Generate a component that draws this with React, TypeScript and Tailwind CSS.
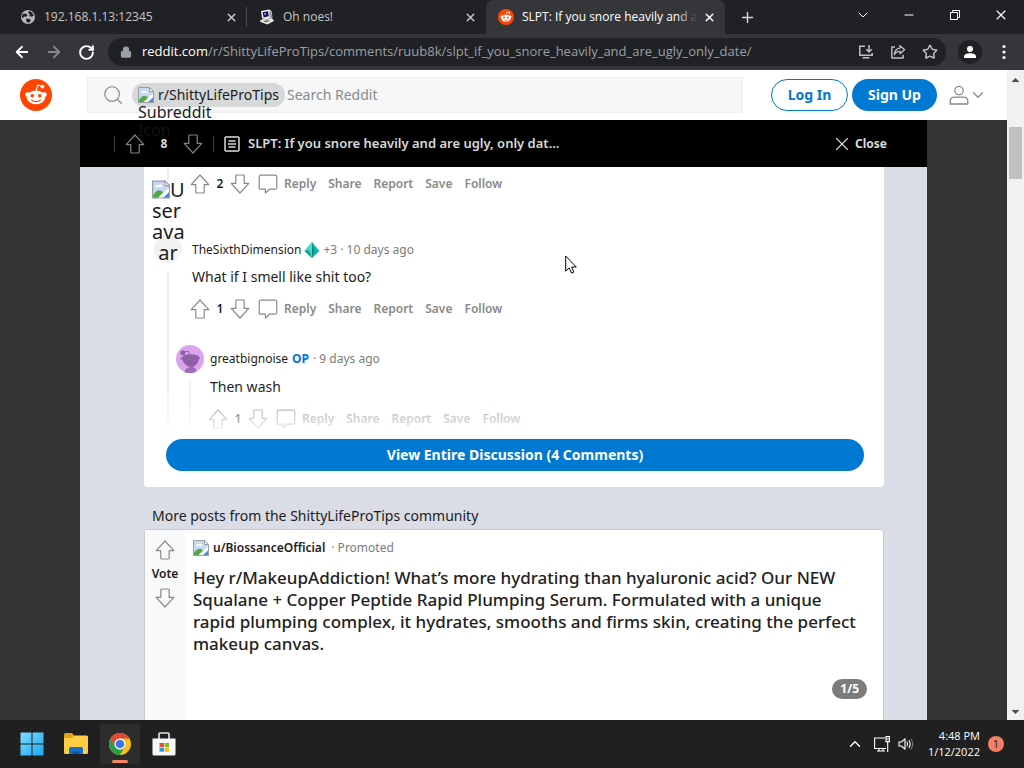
import React, { useState } from 'react';
import {
  ArrowLeft,
  ArrowRight,
  ChevronDown,
  ChevronUp,
  Lock,
  Minus,
  Plus,
  RotateCw,
  Search,
  Star,
  X,
} from 'lucide-react';

type IconProps = { className?: string };

const plex = "font-['Noto_Sans','Open_Sans',sans-serif]";
const segoe = "font-['Open_Sans','Noto_Sans',sans-serif]";

const Snoo = ({ className = '' }: IconProps) => (
  <svg viewBox="0 0 32 32" className={className} aria-hidden="true">
    <circle cx="16" cy="16" r="16" fill="#ff4500" />
    <path d="M16.2 11.5l1.5-5.4 4 .9" fill="none" stroke="#fff" strokeWidth="1.2" strokeLinejoin="round" />
    <circle cx="22.4" cy="7.6" r="1.9" fill="#fff" />
    <circle cx="7.6" cy="15.6" r="2.4" fill="#fff" />
    <circle cx="24.4" cy="15.6" r="2.4" fill="#fff" />
    <ellipse cx="16" cy="18.3" rx="9.2" ry="6.9" fill="#fff" />
    <circle cx="12.3" cy="16.8" r="1.8" fill="#ff4500" />
    <circle cx="19.7" cy="16.8" r="1.8" fill="#ff4500" />
    <path d="M11.8 21.2c2.2 1.8 6.2 1.8 8.4 0" fill="none" stroke="#ff4500" strokeWidth="1.2" strokeLinecap="round" />
  </svg>
);

const Globe = ({ className = '' }: IconProps) => (
  <svg viewBox="0 0 16 16" className={className} aria-hidden="true">
    <circle cx="8" cy="8" r="7" fill="#b4b6b9" />
    <path
      d="M2.6 5l3.2-.6L7.6 6 6.2 7.8l-2-.2L3 9 1.8 8zM9 1.8l3.2 1.9 1.5 2.8-2 1.2-2.4-.6.6-1.9-1.8-1.3zM6 9.5l4 .6.8 1.8-2.3 1.9-1.9-.8z"
      fill="#202124"
    />
  </svg>
);

const OldPc = ({ className = '' }: IconProps) => (
  <svg viewBox="0 0 16 16" className={className} aria-hidden="true">
    <path d="M2 2l8-1.5L12.5 2l1 6.5-8 2.5L3 9z" fill="#f2f2f2" />
    <path d="M3.6 3.2l5.4-1 .8 5-5.2 1.2z" fill="#101060" />
    <path d="M5 4.2l2-.3.3 1.6-2 .4z" fill="#7aa5ff" />
    <path d="M1 11.5L4 10l1.5 1.2 7-2.2 2.7 2.7-6.7 3.8-7-2.5z" fill="#e8e8e8" />
    <path d="M4 12.2L8.5 11l2.7 1L7 13.6z" fill="#777" />
    <path d="M10.2 2l2 .8.8 5.5-2 .6z" fill="#8d8d8d" />
  </svg>
);

const BrokenImage = ({ className = '' }: IconProps) => (
  <svg viewBox="0 0 16 16" className={className} aria-hidden="true">
    <path d="M.5.5h11l4 4v11H.5z" fill="#c8d9f3" />
    <path d="M3 5.7a1.6 1.6 0 0 1 2.6-1.2A2 2 0 0 1 9.2 6z" fill="#fff" />
    <path d="M1 13c3-5 6-5.5 9-2.5l-4 5H1z" fill="#54a944" />
    <path d="M15.5 6L5 15.5h4l6.5-5.500z" fill="#fff" />
    <path d="M15.5 10L10 15.5h5.5z" fill="#4e86d6" />
    <path d="M.5 15.5V.5h11l4 4v11z" fill="none" stroke="#9a9da1" />
    <path d="M11.5.5v4h4z" fill="#fff" stroke="#9a9da1" />
  </svg>
);

const UpArrow = ({ className = '' }: IconProps) => (
  <svg viewBox="0 0 20 20" className={className} fill="none" stroke="currentColor" strokeWidth="1.2" strokeLinejoin="round" aria-hidden="true">
    <path d="M10 1L1.2 10.6h4.6v7.6q0 .8.8.8h6.8q.8 0 .8-.8v-7.6h4.6z" />
  </svg>
);

const DownArrow = ({ className = '' }: IconProps) => (
  <svg viewBox="0 0 20 20" className={className} fill="none" stroke="currentColor" strokeWidth="1.2" strokeLinejoin="round" aria-hidden="true">
    <path d="M10 19l8.8-9.6h-4.6V1.8q0-.8-.8-.8H6.6q-.8 0-.8.8v7.6H1.2z" />
  </svg>
);

const Bubble = ({ className = '' }: IconProps) => (
  <svg viewBox="0 0 20 20" className={className} fill="none" stroke="currentColor" strokeWidth="1.2" strokeLinejoin="round" aria-hidden="true">
    <path d="M3 1.2h14q1.8 0 1.8 1.8v10.4q0 1.8-1.8 1.8h-5.6L7.4 19v-3.8H3q-1.8 0-1.8-1.8V3Q1.2 1.2 3 1.2z" />
  </svg>
);

const PostIcon = ({ className = '' }: IconProps) => (
  <svg viewBox="0 0 16 16" className={className} fill="none" stroke="currentColor" aria-hidden="true">
    <rect x="1" y="1" width="14" height="14" rx="1" strokeWidth="1.5" />
    <path d="M4.5 5h7M4 8h8M4.5 11h7" strokeWidth="1.4" />
  </svg>
);

const Gem = ({ className = '' }: IconProps) => (
  <svg viewBox="0 0 16 16" className={className} aria-hidden="true">
    <path d="M8 0l7.5 9L8 16 .5 9z" fill="#17b5a6" />
    <path d="M8 0v16L.5 9z" fill="#4fdccb" />
    <path d="M8 0l2.5 10L8 16z" fill="#0d8f88" />
    <path d="M.5 9L5 8l3 8z" fill="#1f9d92" />
  </svg>
);

const Avatar = ({ className = '' }: IconProps) => (
  <svg viewBox="0 0 28 28" className={className} aria-hidden="true">
    <circle cx="14" cy="14" r="14" fill="#dda4ee" />
    <path d="M8.5 26.9Q9 23 14 22t6.5 4.500a14 14 0 0 1-12 .4z" fill="#a06bb8" />
    <path d="M7 10.500q7.500-2.500 15 0 1.500 4-.5 7.500-2.500 4-6.500 4t-7-4Q5 14.500 7 10.500z" fill="#8f5fa8" />
    <path d="M13.5 10l-1-4-4 1" fill="none" stroke="#8f5fa8" strokeWidth="1" />
    <circle cx="6.8" cy="7.8" r="2.5" fill="#8f5fa8" />
    <circle cx="5.8" cy="13.5" r="1.2" fill="#8f5fa8" />
    <circle cx="22.7" cy="13" r="1.2" fill="#8f5fa8" />
  </svg>
);

const Tab = ({ icon, title, active, divider }: { icon: React.ReactNode; title: string; active?: boolean; divider?: boolean }) => (
  <div
    className={`relative flex w-[239px] min-w-0 items-center pl-3 pr-2 ${
      active ? 'rounded-t-lg bg-[#35363a] text-white' : 'text-[#c4c7ca]'
    }`}
  >
    {icon}
    <span className="relative ml-2 min-w-0 flex-1 overflow-hidden whitespace-nowrap text-xs">
      {title}
      {active && <span className="absolute inset-y-0 right-0 w-5 bg-linear-to-r from-transparent to-[#35363a]" />}
    </span>
    <button aria-label="Close tab" className="ml-1 flex size-4 items-center justify-center">
      <X size={13} strokeWidth={2.7} />
    </button>
    {divider && <span className="absolute right-0 h-5 w-px bg-[#4a4c50]" />}
  </div>
);

const Browser = () => (
  <div className={`shrink-0 bg-[#202124] ${segoe}`}>
    <div className="flex h-[34px]">
      <div className="flex min-w-0 flex-1 pl-2">
        <Tab icon={<Globe className="size-4 shrink-0" />} title="192.168.1.13:12345" divider />
        <Tab icon={<OldPc className="size-4 shrink-0" />} title="Oh noes!" />
        <Tab icon={<Snoo className="size-4 shrink-0" />} title="SLPT: If you snore heavily and are" active />
        <button aria-label="New tab" className="flex w-11 items-center justify-center text-[#d6d8da]">
          <Plus size={17} />
        </button>
      </div>
      <div className="flex pb-1 text-white">
        <button aria-label="Search tabs" className="flex w-[46px] items-center justify-center">
          <ChevronDown size={16} strokeWidth={1.5} />
        </button>
        <button aria-label="Minimize" className="flex w-[46px] items-center justify-center">
          <Minus size={14} strokeWidth={1.7} />
        </button>
        <button aria-label="Restore" className="flex w-[46px] items-center justify-center">
          <svg viewBox="0 0 12 12" className="size-3" fill="none" stroke="currentColor">
            <path d="M1.5 3.5h7v7h-7zM3.5 3.5v-2h7v7h-2" />
          </svg>
        </button>
        <button aria-label="Close" className="flex w-[46px] items-center justify-center">
          <X size={16} strokeWidth={1.6} />
        </button>
      </div>
    </div>
    <div className="flex h-9 items-center bg-[#35363a] pr-3">
      <button aria-label="Back" className="flex w-8 justify-center pl-3 text-white">
        <ArrowLeft size={18} strokeWidth={2.4} className="shrink-0" />
      </button>
      <button aria-label="Forward" className="flex w-8 justify-center pl-3 text-[#85878b]">
        <ArrowRight size={18} strokeWidth={2.4} className="shrink-0" />
      </button>
      <button aria-label="Reload" className="flex w-8 justify-center pl-3 text-white">
        <RotateCw size={17} strokeWidth={2.8} className="shrink-0" />
      </button>
      <div className="ml-3 flex h-7 min-w-0 flex-1 items-center rounded-full bg-[#202124] pl-3 pr-2 text-[#bdc1c6]">
        <Lock size={12} fill="#9aa0a6" stroke="#9aa0a6" strokeWidth={2.5} className="shrink-0" />
        <span className="ml-2.5 min-w-0 flex-1 overflow-hidden whitespace-nowrap text-[13px] text-[#9aa0a6]">
          <span className="text-white">reddit.com</span>
          /r/ShittyLifeProTips/comments/ruub8k/slpt_if_you_snore_heavily_and_are_ugly_only_date/
        </span>
        <div className="flex items-center gap-4">
          <button aria-label="Install Reddit">
            <svg viewBox="0 0 16 16" className="size-4" fill="none" stroke="currentColor" strokeWidth="1.5">
              <path d="M7 2.2H1.8v9h12.4V9M4.5 13.8h7M11 1v6.5M8.3 5.2L11 7.9l2.7-2.7" />
            </svg>
          </button>
          <button aria-label="Share page">
            <svg viewBox="0 0 16 16" className="size-4" fill="none" stroke="currentColor" strokeWidth="1.4" strokeLinejoin="round">
              <path d="M5 3H1.8v11h11.4v-3.2M10 1.8l4.6 4L10 9.6V7.4C7.4 7.4 5.6 8.4 4.4 10.6 4.7 7 6.6 4.5 10 4.1z" />
            </svg>
          </button>
          <button aria-label="Bookmark">
            <Star size={16} strokeWidth={2.2} />
          </button>
        </div>
      </div>
      <button aria-label="Profile" className="ml-3 flex size-6 items-center justify-center rounded-full bg-[#202124]">
        <svg viewBox="0 0 14 14" className="size-3.5" fill="#fff">
          <circle cx="7" cy="4" r="3" />
          <path d="M1 13v-1.600C1 9.300 4 8.200 7 8.200s6 1.100 6 3.200V13z" />
        </svg>
      </button>
      <button aria-label="Menu" className="ml-3.5 flex w-4 justify-center">
        <svg viewBox="0 0 4 16" className="h-4 w-1" fill="#fff">
          <circle cx="2" cy="2.5" r="1.6" />
          <circle cx="2" cy="8" r="1.6" />
          <circle cx="2" cy="13.5" r="1.6" />
        </svg>
      </button>
    </div>
  </div>
);

const Header = () => {
  const [query, setQuery] = useState('');

  return (
    <header className="relative z-10 flex h-[50px] shrink-0 items-center bg-white px-5">
      <a href="#home" aria-label="Reddit home">
        <Snoo className="size-8" />
      </a>
      <div className="ml-[35px] flex h-9 min-w-0 flex-1 items-center border border-[#edeff1] bg-[#f6f7f8] pl-3.5">
        <Search size={22} strokeWidth={1.3} className="shrink-0 text-[#878a8c]" />
        <div className="relative ml-2 flex h-6 items-center gap-1 rounded-full bg-[#d7d8d9] px-1.5 text-[#1c1c1c]">
          <BrokenImage className="size-4" />
          <span className="text-sm">r/ShittyLifeProTips</span>
          {/* alt text of the missing icon spills out below the chip */}
          <span className="absolute left-1.5 top-5 text-base leading-[18px]">
            Subreddit
            <br />
            <span className="text-[#121212]">Icon</span>
          </span>
        </div>
        <input
          type="text"
          aria-label="Search Reddit"
          placeholder="Search Reddit"
          value={query}
          onChange={(e) => setQuery(e.target.value)}
          className="ml-0.5 min-w-0 flex-1 bg-transparent text-sm outline-none placeholder:text-[#878a8c]"
        />
      </div>
      <button className="ml-7 h-8 w-[77px] rounded-full border border-[#0079d3] text-sm font-bold text-[#0079d3]">Log In</button>
      <button className="ml-1 h-8 w-[85px] rounded-full bg-[#0079d3] text-sm font-bold text-white">Sign Up</button>
      <button aria-label="User menu" className="ml-3 flex items-center text-[#878a8c]">
        <svg viewBox="0 0 20 20" className="size-5" fill="none" stroke="currentColor" strokeWidth="1.3" strokeLinejoin="round">
          <circle cx="10" cy="5.6" r="4.2" />
          <path d="M1.2 19v-2.6q0-4.2 4.4-4.2h8.8q4.4 0 4.4 4.2V19z" />
        </svg>
        <ChevronDown size={18} strokeWidth={1.8} />
      </button>
    </header>
  );
};

const PostBar = () => (
  <div className="flex h-[47px] shrink-0 items-center bg-black pl-[34px] pr-10 text-[#d7dadc]">
    <span className="h-4 w-px bg-[#3f4042]" />
    <button aria-label="Upvote" className="ml-2.5">
      <UpArrow className="size-5 text-[#818384]" />
    </button>
    <span className="w-[38px] text-center text-xs font-bold">8</span>
    <button aria-label="Downvote">
      <DownArrow className="size-5 text-[#818384]" />
    </button>
    <span className="ml-2.5 h-4 w-px bg-[#3f4042]" />
    <PostIcon className="ml-2.5 size-4 shrink-0" />
    <h1 className="ml-2 whitespace-nowrap text-[13px] font-semibold">
      SLPT: If you snore heavily and are ugly, only dat...
    </h1>
    <button className="ml-auto flex items-center gap-0.5 text-xs font-bold">
      <X size={22} strokeWidth={1.2} />
      Close
    </button>
  </div>
);

const Actions = ({ votes }: { votes: number }) => (
  <div className="flex h-6 items-center text-xs font-semibold text-[#878a8c]">
    <button aria-label="Upvote">
      <UpArrow className="size-5" />
    </button>
    <span className="w-5 text-center text-[#1c1c1c]">{votes}</span>
    <button aria-label="Downvote">
      <DownArrow className="size-5" />
    </button>
    <div className="ml-2 flex items-center gap-3">
      <button className="flex items-center gap-1.5">
        <Bubble className="size-5" />
        Reply
      </button>
      <button>Share</button>
      <button>Report</button>
      <button>Save</button>
      <button>Follow</button>
    </div>
  </div>
);

const Thread = () => (
  <section className="rounded-b-sm bg-white pb-4">
    <div className="relative flex gap-2 pl-2.5">
      <div className="relative flex w-7 shrink-0 flex-col items-center">
        <span className="h-3.5 w-0.5 bg-[#edeff1]" />
        <span className="mt-[54px] size-7 rounded-full bg-[#f1f2f3]" />
        <span className="mt-2 w-0.5 flex-1 bg-[#edeff1]" />
        {/* avatar failed to load, its alt text wraps in the narrow column */}
        <span className="absolute top-3 w-8 text-xl leading-[21px] text-[#1c1c1c]">
          <span className="flex">
            <BrokenImage className="w-[18px] shrink-0" />U
          </span>
          ser
          <br />
          ava
          <span className="block text-center">ar</span>
        </span>
      </div>
      <div className="min-w-0 flex-1 pb-2">
        <div className="pt-[5px]">
          <Actions votes={2} />
        </div>
        <article className="mt-11">
          <div className="flex h-5 items-center px-0.5 text-xs text-[#7c7c7c]">
            <a href="#TheSixthDimension" className="text-[#1c1c1c]">TheSixthDimension</a>
            <Gem className="mx-[3px] size-4" />
            <span>+3 · 10 days ago</span>
          </div>
          <p className="mt-[7px] px-0.5 text-sm text-[#1c1c1c]">What if I smell like shit too?</p>
          <div className="mt-2.5">
            <Actions votes={1} />
          </div>
        </article>
        <article className="-ml-3.5 mt-6 flex gap-1">
          <div className="flex w-7 shrink-0 flex-col items-center">
            <Avatar className="size-7" />
            <span className="mt-2 w-0.5 flex-1 bg-[#edeff1]" />
          </div>
          <div>
            <div className="flex h-7 items-center gap-1 px-0.5 text-xs text-[#7c7c7c]">
              <a href="#greatbignoise" className="text-[#1c1c1c]">greatbignoise</a>
              <span className="font-bold text-[#0079d3]">OP</span>
              <span>· 9 days ago</span>
            </div>
            <p className="mt-1 px-0.5 text-sm text-[#1c1c1c]">Then wash</p>
            <div className="mt-2.5">
              <Actions votes={1} />
            </div>
          </div>
        </article>
      </div>
      <div className="pointer-events-none absolute inset-x-0 bottom-0 h-[52px] bg-linear-to-b from-transparent to-white" />
    </div>
    <div className="pl-[22px] pr-5">
      <button className="h-8 w-full rounded-full bg-[#0079d3] text-sm font-bold text-white">
        View Entire Discussion (4 Comments)
      </button>
    </div>
  </section>
);

const PromotedPost = () => (
  <article className="flex min-h-0 flex-1 rounded-t border border-b-0 border-[#ccc] bg-white">
    <div className="flex w-10 shrink-0 flex-col items-center bg-[#f8f9fa] pt-2.5 text-[#878a8c]">
      <button aria-label="Upvote">
        <UpArrow className="size-5" />
      </button>
      <span className="my-1.5 text-xs font-semibold text-[#1c1c1c]">Vote</span>
      <button aria-label="Downvote">
        <DownArrow className="size-5" />
      </button>
    </div>
    <div className="relative min-w-0 flex-1 px-2 pt-2.5">
      <div className="flex items-center text-xs text-[#787c7e]">
        <BrokenImage className="size-4" />
        <a href="#BiossanceOfficial" className="ml-1 font-semibold text-[#1c1c1c]">u/BiossanceOfficial</a>
        <span className="ml-1.5">· Promoted</span>
      </div>
      <h3 className="mt-[11px] pr-3 text-[17px] font-medium leading-[22px] text-[#222]">
        Hey r/MakeupAddiction! What’s more hydrating than hyaluronic acid? Our NEW Squalane + Copper Peptide Rapid
        Plumping Serum. Formulated with a unique rapid plumping complex, it hydrates, smooths and firms skin, creating
        the perfect makeup canvas.
      </h3>
      <span className="absolute right-4 top-[149px] rounded-full bg-[#7c7c7c] px-2 py-0.5 text-xs font-bold text-white">1/5</span>
    </div>
  </article>
);

const Scrollbar = () => (
  <div className="flex w-[17px] shrink-0 flex-col items-center bg-[#f1f1f1]">
    <svg viewBox="0 0 17 17" className="w-full" fill="#505050">
      <path d="M8.5 8l4 4h-8z" />
    </svg>
    <div className="mt-10 h-[52px] w-[13px] bg-[#c1c1c1]" />
    <svg viewBox="0 0 17 17" className="mt-auto w-full" fill="#505050">
      <path d="M8.5 11l4-4h-8z" />
    </svg>
  </div>
);

const Taskbar = () => (
  <footer className={`flex h-12 shrink-0 items-center bg-[#202020] pl-2.5 pr-5 text-white ${segoe}`}>
    <button aria-label="Start" className="flex w-11 justify-center">
      <svg viewBox="0 0 24 24" className="size-6">
        <defs>
          <linearGradient id="win" x1="0" y1="0" x2="1" y2="1">
            <stop offset="0" stopColor="#7fdcff" />
            <stop offset="1" stopColor="#1ca6f5" />
          </linearGradient>
        </defs>
        <path d="M.5.5h11v11H.5zM12.500.5h11v11h-11zM.5 12.5h11v11H.5zM12.5 12.5h11v11h-11z" fill="url(#win)" />
      </svg>
    </button>
    <button aria-label="File Explorer" className="flex w-11 justify-center">
      <svg viewBox="0 0 24 24" className="size-6">
        <path d="M0 2.5Q0 1 1.5 1H8l2.5 3v4H0z" fill="#e3a21a" />
        <path d="M0 6h8l2-2.5h12.5Q24 3.5 24 5v15.5q0 1.5-1.5 1.5h-21Q0 22 0 20.5z" fill="#fcce43" />
        <path d="M5 22v-5.5Q5 15 6.5 15h11q1.5 0 1.5 1.5V22z" fill="#1771c8" />
        <path d="M8.5 22v-2.5h7V22z" fill="#0f559c" />
      </svg>
    </button>
    <button aria-label="Google Chrome" className="flex w-11 justify-center">
      <span className="relative flex size-10 items-center justify-center rounded bg-[#2d2d2d]">
        <svg viewBox="0 0 24 24" className="size-6">
          <circle cx="12" cy="12" r="11" fill="#fbc116" />
          <path d="M2.47 6.5A11 11 0 0 1 21.53 6.5H12L7.24 14.75z" fill="#e0483c" />
          <path d="M2.47 6.5A11 11 0 0 0 12 23l4.76-8.25a5.5 5.5 0 0 1-9.52 0z" fill="#2d9c4a" />
          <circle cx="12" cy="12" r="5.5" fill="#fff" />
          <circle cx="12" cy="12" r="4.3" fill="#3b78e7" />
        </svg>
        <span className="absolute bottom-px h-[3px] w-4 rounded-full bg-[#f08467]" />
      </span>
    </button>
    <button aria-label="Microsoft Store" className="flex w-11 justify-center">
      <svg viewBox="0 0 24 24" className="size-6">
        <path d="M7 7V2q0-1 1-1h8q1 0 1 1v5" fill="none" stroke="#e8e8e8" strokeWidth="1.6" />
        <path d="M.5 6.5h23V22q0 1.5-1.5 1.5H2Q.5 23.5.5 22z" fill="#f7f7f7" />
        <path d="M7.5 11H12v4H7.5z" fill="#e8502a" />
        <path d="M12.700 11H17v4h-4.300z" fill="#7db928" />
        <path d="M7.5 15.700H12v4H7.5z" fill="#1c9fe0" />
        <path d="M12.700 15.700H17v4h-4.300z" fill="#f8b814" />
      </svg>
    </button>
    <div className="ml-auto flex items-center">
      <button aria-label="Show hidden icons">
        <ChevronUp size={18} strokeWidth={1.8} />
      </button>
      <button aria-label="Network" className="ml-2.5">
        <svg viewBox="0 0 16 16" className="size-4" fill="none" stroke="currentColor" strokeWidth="1.1">
          <path d="M11 2H.6v10.5H12M5 12.5V15M9 12.5V15M3 15h8M12 .6h3.4v5H12zM13.7 5.6V16M12 3h3.4" />
        </svg>
      </button>
      <button aria-label="Volume" className="ml-2">
        <svg viewBox="0 0 16 16" className="size-4" fill="none" stroke="currentColor" strokeWidth="1.1" strokeLinecap="round">
          <path d="M1 6h2.5L7 3v10l-3.5-3H1zM9 6q1.3 2 0 4M11 4.5q2.5 3.5 0 7" />
          <path d="M13 3q3.5 5 0 10" stroke="#777" />
        </svg>
      </button>
      <div className="ml-3.5 text-right text-[11px] leading-4">
        <div>4:48 PM</div>
        <div>1/12/2022</div>
      </div>
      <span className="ml-2 flex size-4 items-center justify-center rounded-full bg-[#f57f66] text-[11px] text-[#202020]">1</span>
    </div>
  </footer>
);

export default function App() {
  return (
    <div className="flex h-screen flex-col overflow-hidden">
      <Browser />
      <div className="flex min-h-0 flex-1">
        <div className={`relative flex min-w-0 flex-1 flex-col bg-[#333] ${plex}`}>
          <Header />
          <main className="mx-20 flex min-h-0 flex-1 flex-col bg-[#dadde5]">
            <PostBar />
            <div className="flex min-h-0 flex-1 flex-col pl-16 pr-[43px]">
              <Thread />
              <h2 className="px-2 pb-[3px] pt-[19px] text-sm text-[#1c1c1c]">
                More posts from the ShittyLifeProTips community
              </h2>
              <PromotedPost />
            </div>
          </main>
          <svg viewBox="0 0 12 19" className="absolute left-[565px] top-[185px] h-[19px] w-3" fill="#fff" stroke="#000">
            <path d="M.7 1v15.2l3.5-3.3 2.3 5.2 2.3-1-2.2-5.1h4.7z" />
          </svg>
        </div>
        <Scrollbar />
      </div>
      <Taskbar />
    </div>
  );
}
